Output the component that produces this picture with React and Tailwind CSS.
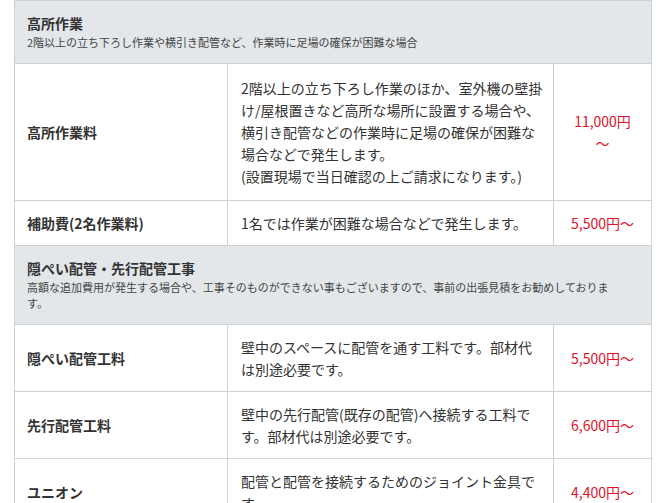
const sections = [
  {
    title: '高所作業',
    sub: ['2階以上の立ち下ろし作業や横引き配管など、作業時に足場の確保が困難な場合'],
    rows: [
      {
        label: '高所作業料',
        desc: [
          '2階以上の立ち下ろし作業のほか、室外機の壁掛',
          'け/屋根置きなど高所な場所に設置する場合や、',
          '横引き配管などの作業時に足場の確保が困難な',
          '場合などで発生します。',
          '(設置現場で当日確認の上ご請求になります。)',
        ],
        price: ['11,000円', '～'],
        pad: 'py-[13px]',
      },
      {
        label: '補助費(2名作業料)',
        desc: ['1名では作業が困難な場合などで発生します。'],
        price: ['5,500円～'],
      },
    ],
  },
  {
    title: '隠ぺい配管・先行配管工事',
    sub: [
      '高額な追加費用が発生する場合や、工事そのものができない事もございますので、事前の出張見積をお勧めしておりま',
      'す。',
    ],
    rows: [
      {
        label: '隠ぺい配管工料',
        desc: ['壁中のスペースに配管を通す工料です。部材代', 'は別途必要です。'],
        price: ['5,500円～'],
      },
      {
        label: '先行配管工料',
        desc: ['壁中の先行配管(既存の配管)へ接続する工料で', 'す。部材代は別途必要です。'],
        price: ['6,600円～'],
      },
      {
        label: 'ユニオン',
        desc: ['配管と配管を接続するためのジョイント金具で', 'す。'],
        price: ['4,400円～'],
      },
    ],
  },
]

function Lines({ items }) {
  return items.map((t, i) => (
    <span key={i} className="block whitespace-nowrap">
      {t}
    </span>
  ))
}

export default function App() {
  return (
    <div
      className="bg-white min-h-[503px] pl-[14px] text-[#333]"
      style={{ fontFamily: '"Noto Sans CJK JP", "Noto Sans", sans-serif' }}
    >
      <table className="w-[638px] border-collapse table-fixed">
        <colgroup>
          <col className="w-[213px]" />
          <col className="w-[326px]" />
          <col />
        </colgroup>
        <tbody>
          {sections.map((s) => (
            <>
              <tr key={s.title} className="bg-[#e3e7ea]">
                <td colSpan={3} className="border border-[#cfd2d4] pl-[12px] pr-[20px] pt-[12px] pb-[12px] align-top">
                  <div className="text-[14px] font-bold leading-[21px]">{s.title}</div>
                  <div className="text-[11px] leading-[16.5px] text-[#444]">
                    <Lines items={s.sub} />
                  </div>
                </td>
              </tr>
              {s.rows.map((r) => (
                <tr key={r.label}>
                  <td className={`border border-[#cfd2d4] pl-[12px] text-[14px] font-bold leading-[22px] align-middle ${r.pad || 'py-[11px]'}`}>
                    {r.label}
                  </td>
                  <td className={`border border-[#cfd2d4] pl-[13px] pr-[6px] text-[14px] leading-[22px] align-middle ${r.pad || 'py-[11px]'}`}>
                    <Lines items={r.desc} />
                  </td>
                  <td className="border border-[#cfd2d4] text-center text-[14px] leading-[22px] text-[#e0102a] align-middle">
                    <Lines items={r.price} />
                  </td>
                </tr>
              ))}
            </>
          ))}
        </tbody>
      </table>
    </div>
  )
}
